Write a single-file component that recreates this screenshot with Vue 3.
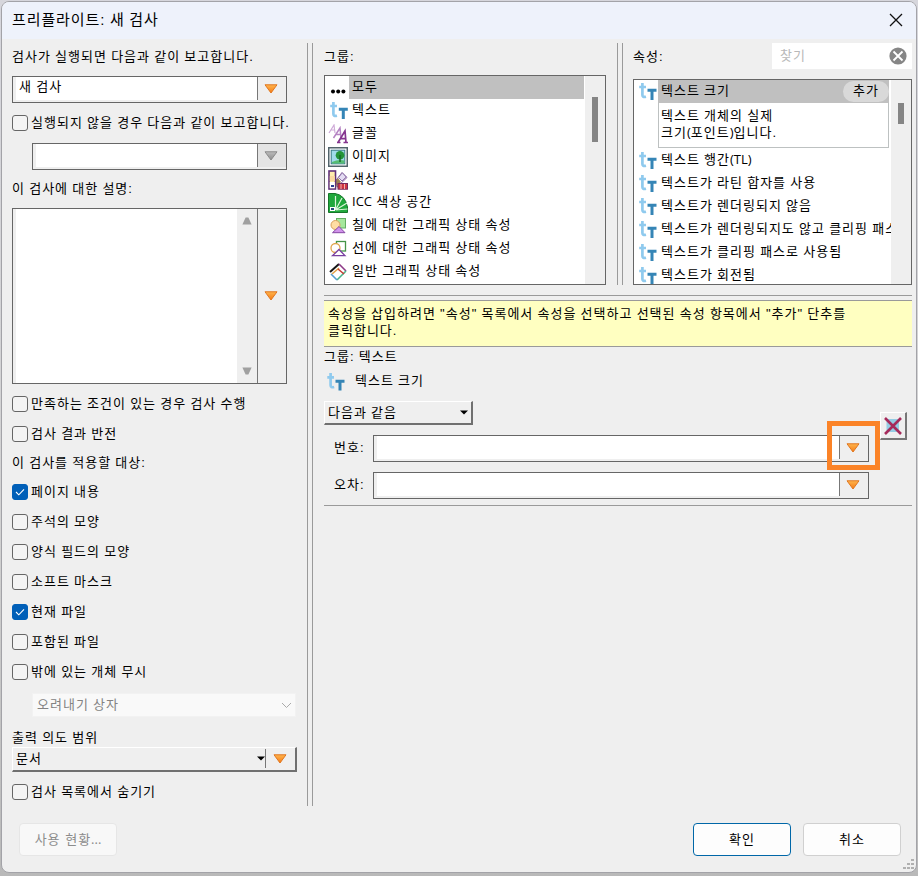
<template>
  <div class="screen">
    <div class="dialog">
      <header class="title-bar">
        <h1>프리플라이트: 새 검사</h1>
        <svg class="close" width="14" height="14" viewBox="0 0 14 14">
          <path d="M1 1L13 13M13 1L1 13" />
        </svg>
      </header>

      <div class="body">
        <!-- left panel -->
        <section class="left">
          <div class="label first">검사가 실행되면 다음과 같이 보고합니다.</div>
          <div class="field">
            <div class="input">{{ state.name }}</div>
            <div class="drop"><svg width="14" height="10" viewBox="0 0 14 10"><path class="tri" d="M1 .8H13L7 9Z" /></svg></div>
          </div>
          <label class="check tall"><i class="box"></i><span>실행되지 않을 경우 다음과 같이 보고합니다.</span></label>
          <div class="field indent">
            <div class="input"></div>
            <div class="drop off"><svg width="14" height="10" viewBox="0 0 14 10"><path class="tri gray" d="M1 .8H13L7 9Z" /></svg></div>
          </div>
          <div class="label desc-label">이 검사에 대한 설명:</div>
          <div class="field area">
            <div class="input"></div>
            <div class="scroll">
              <svg width="10" height="8" viewBox="0 0 10 8"><path d="M3.6 .5H6.4L9.6 7.5H.4Z" /></svg>
              <svg width="10" height="8" viewBox="0 0 10 8"><path d="M.4 .5H9.6L6.4 7.5H3.6Z" /></svg>
            </div>
            <div class="drop"><svg width="14" height="10" viewBox="0 0 14 10"><path class="tri" d="M1 .8H13L7 9Z" /></svg></div>
          </div>

          <div class="options">
            <label v-for="item in state.options" :key="item.text" class="check">
              <i class="box"></i><span>{{ item.text }}</span>
            </label>
          </div>
          <div class="label target-label">이 검사를 적용할 대상:</div>
          <label v-for="item in state.targets" :key="item.text" class="check" @click="item.on = !item.on">
            <i class="box" :class="{ on: item.on }">
              <svg v-if="item.on" width="10" height="8" viewBox="0 0 10 8"><path d="M1 4L3.8 6.8L9 1.4" /></svg>
            </i>
            <span>{{ item.text }}</span>
          </label>
          <div class="select-off">
            <span>오려내기 상자</span>
            <svg width="11" height="7" viewBox="0 0 11 7"><path d="M1 1L5.5 5.5L10 1" /></svg>
          </div>
          <div class="label scope-label">출력 의도 범위</div>
          <div class="select wide">
            <span>문서</span>
            <svg width="8" height="5" viewBox="0 0 8 5"><path d="M0 .5H8L4 4.5Z" /></svg>
            <div class="side"><svg width="14" height="10" viewBox="0 0 14 10"><path class="tri" d="M1 .8H13L7 9Z" /></svg></div>
          </div>
          <label class="check last"><i class="box"></i><span>검사 목록에서 숨기기</span></label>
        </section>

        <div class="v-split"></div>

        <!-- right panel -->
        <section class="right">
          <div class="lists">
            <div class="groups">
              <div class="label group-label">그룹:</div>
              <div class="list">
                <div class="items">
                  <div v-for="(item, idx) in state.groups" :key="item.text" class="item" :class="{ active: idx === state.group }" @click="state.group = idx">
                    <svg class="icon" width="20" height="20" viewBox="0 0 20 20">
                      <g v-if="item.icon === 'dots'"><circle cx="5" cy="13.5" r="2" /><circle cx="10.2" cy="13.5" r="2" /><circle cx="15.4" cy="13.5" r="2" /></g>
                      <g v-else-if="item.icon === 'text'">
                        <path d="M5.4 1V12.9Q5.4 15.6 9 14.7M2.2 5H9" fill="none" stroke="#8fcaee" stroke-width="2.7" />
                        <path d="M10.8 8.3H19.8M15.3 8.3V18" fill="none" stroke="#3585b6" stroke-width="3" />
                      </g>
                      <g v-else-if="item.icon === 'font'" fill="none">
                        <path d="M1 9L6 1L7 9M3 6H7" stroke="#cfabd8" stroke-width="1.2" />
                        <path d="M5.5 14L12 4L13 14M8 10.5H12.5" stroke="#b583c3" stroke-width="1.5" />
                        <path d="M10 18.5L17 7L18 18.5M13 14.7H17.5M9 18.5H12.5M15.5 18.5H20" stroke="#85358f" stroke-width="1.7" />
                      </g>
                      <g v-else-if="item.icon === 'image'">
                        <rect x=".75" y=".75" width="18.5" height="18.5" fill="#fff" stroke="#52646b" stroke-width="1.5" />
                        <rect x="3.2" y="3.2" width="13.6" height="13.6" fill="#a0dbea" stroke="#357985" />
                        <path d="M4 15Q10 12 16.4 13.4V16.4H4Z" fill="#56bd72" />
                        <circle cx="12" cy="8.2" r="4.3" fill="#249439" /><path d="M12 8V15" stroke="#176226" stroke-width="1.4" />
                      </g>
                      <g v-else-if="item.icon === 'color'">
                        <path d="M8 9L13 13L9 18Z" fill="#9a8153" />
                        <path d="M7.5 11L14 2.5L19 7.5L9 17" fill="#fff" stroke="#8960a2" />
                        <path d="M7.5 11L10 8L13 12L8.5 17Z" fill="#9a8153" />
                        <path d="M10.5 7.5L14.3 2.8L18.2 7L14 11Z" fill="#e4dcf3" stroke="#8d74a8" />
                        <rect x="10" y="13.5" width="9.5" height="5.7" fill="#cf3540" stroke="#75295c" /><path d="M13 14V19M16.5 14V19" stroke="#efb2b2" />
                        <rect x="1" y="1" width="6.5" height="18" fill="#ffedac" stroke="#60317a" stroke-width="1.6" />
                        <rect x="1.8" y="6" width="5" height="5" fill="#fbd9a0" /><rect x="1.8" y="12" width="5" height="6.2" fill="#fff" />
                        <rect x="3" y="15" width="3" height="2" fill="#293f91" />
                      </g>
                      <g v-else-if="item.icon === 'icc'">
                        <path d="M.5 .5H7Q17 2 19.5 14V19.5H.5Z" fill="#20a83c" stroke="#167529" />
                        <path d="M7.5 17L7.5 3M7.5 17L14 5M7.5 17L19 10M7.5 17L19.5 16" stroke="#dcf5d9" stroke-width="1.2" />
                        <rect x="2.5" y="14.5" width="4" height="3" fill="#264c79" stroke="#fff" />
                      </g>
                      <g v-else-if="item.icon === 'fill'">
                        <rect x="8.5" y="2.5" width="9" height="9.5" fill="#a5e79c" stroke="#65ae64" />
                        <circle cx="7.5" cy="9" r="4.5" fill="#ffdda3" stroke="#d8a05b" />
                        <path d="M11 10.5L17 16.7H4.5Z" fill="#d193eb" stroke="#8547a3" />
                      </g>
                      <g v-else-if="item.icon === 'line'">
                        <rect x="8.5" y="2.5" width="9" height="9.5" fill="#fff" stroke="#459447" stroke-width="1.3" />
                        <circle cx="7.5" cy="9" r="4.5" fill="#fff" stroke="#e0a54f" stroke-width="1.3" />
                        <path d="M11 10.5L17 16.7H4.5Z" fill="#fff" stroke="#7940a0" stroke-width="1.3" />
                      </g>
                      <g v-else-if="item.icon === 'general'" fill="none" stroke-width="1.6">
                        <path d="M2 10L11 2" stroke="#161616" stroke-width="2" /><path d="M11 2L18 9" stroke="#8e3a88" />
                        <path d="M18 9L9 18" stroke="#4cb48c" /><path d="M9 18L3 12" stroke="#559cd0" />
                        <path d="M4 12L11 6" stroke="#e2a147" /><path d="M10 7L16 12" stroke="#c83c33" />
                      </g>
                      <rect v-else width="20" height="3" fill="#a9a0ad" />
                    </svg>
                    <span><i v-for="(part, n) in split(item.text)" :key="n" :class="{ latin: n % 2 }">{{ part }}</i></span>
                  </div>
                </div>
                <div class="track"><div class="thumb group-thumb"></div></div>
              </div>
            </div>

            <div class="v-split"></div>

            <div class="props">
              <div class="props-head">
                <div class="label">속성:</div>
                <div class="search">
                  <span>찾기</span>
                  <svg width="18" height="18" viewBox="0 0 18 18"><circle cx="9" cy="9" r="8.6" /><path d="M4.5 4.5L13.5 13.5M13.5 4.5L4.5 13.5" /></svg>
                </div>
              </div>
              <div class="list">
                <div class="items">
                  <template v-for="(text, idx) in state.props" :key="text">
                    <div class="item" :class="{ active: idx === 0 }">
                      <svg class="icon" width="20" height="20" viewBox="0 0 20 20">
                        <path d="M5.4 1V12.9Q5.4 15.6 9 14.7M2.2 5H9" fill="none" stroke="#8fcaee" stroke-width="2.7" />
                        <path d="M10.5 8.3H19.5M15 8.3V18" fill="none" stroke="#3585b6" stroke-width="3" />
                      </svg>
                      <span><i v-for="(part, n) in split(text)" :key="n" :class="{ latin: n % 2 }">{{ part }}</i></span>
                      <b v-if="idx === 0" class="add">추가</b>
                    </div>
                    <div v-if="idx === 0" class="info">텍스트 개체의 실제<br>크기<i class="latin">(</i>포인트<i class="latin">)</i>입니다.</div>
                  </template>
                </div>
                <div class="track"><div class="thumb prop-thumb"></div></div>
              </div>
            </div>
          </div>

          <div class="h-split"></div>
          <div class="notice">속성을 삽입하려면 "속성" 목록에서 속성을 선택하고 선택된 속성 항목에서 "추가" 단추를<br>클릭합니다.</div>

          <div class="rule">
            <div class="rule-main">
              <div class="rule-group">그룹: 텍스트</div>
              <div class="rule-name">
                <svg width="20" height="20" viewBox="0 0 20 20">
                  <path d="M4.6 1V13.2Q4.6 15.9 8.2 15M1.3 5.3H8" fill="none" stroke="#8fcaee" stroke-width="2.7" />
                  <path d="M9.5 9.3H18.5M14 9.3V18.5" fill="none" stroke="#3585b6" stroke-width="3" />
                </svg>
                <span>텍스트 크기</span>
              </div>
              <div class="select">
                <span>다음과 같음</span>
                <svg width="8" height="5" viewBox="0 0 8 5"><path d="M0 .5H8L4 4.5Z" /></svg>
              </div>
              <div v-for="(text, idx) in ['번호:', '오차:']" :key="text" class="value">
                <span>{{ text }}</span>
                <div class="field">
                  <div class="input"></div>
                  <div class="drop"><svg width="14" height="10" viewBox="0 0 14 10"><path class="tri" d="M1 .8H13L7 9Z" /></svg></div>
                </div>
                <div v-if="idx === 0" class="highlight"></div>
              </div>
            </div>
            <button class="remove">
              <svg width="20" height="20" viewBox="0 0 20 20">
                <rect x="3.5" y="3" width="12.5" height="13" fill="#95cce4" />
                <path d="M2 2L18 18M18 2L2 18" fill="none" stroke="#a62b5b" stroke-width="2.6" />
              </svg>
            </button>
          </div>
        </section>
      </div>

      <footer class="footer">
        <button class="btn usage" disabled>사용 현황<i class="latin">...</i></button>
        <button class="btn ok">확인</button>
        <button class="btn">취소</button>
        <svg class="grip" width="12" height="12" viewBox="0 0 12 12">
          <path d="M9 1h3v2h-3zM5 5h3v2h-3zM9 5h3v2h-3zM1 9h3v2h-3zM5 9h3v2h-3zM9 9h3v2h-3z" />
        </svg>
      </footer>
    </div>
    <!-- shared gradients of the drop arrows -->
    <svg class="defs" width="0" height="0">
      <linearGradient id="orange" x1="0" y1="0" x2="0" y2="1"><stop offset="0" stop-color="#ffb54d" /><stop offset="1" stop-color="#f57b14" /></linearGradient>
      <linearGradient id="gray" x1="0" y1="0" x2="0" y2="1"><stop offset="0" stop-color="#bdbdbd" /><stop offset="1" stop-color="#8c8c8c" /></linearGradient>
    </svg>
  </div>
</template>

<script setup>
import { reactive } from 'vue';

const state = reactive({
  name: '새 검사',
  group: 0,
  options: [
    { text: '만족하는 조건이 있는 경우 검사 수행' },
    { text: '검사 결과 반전' }
  ],
  targets: [
    { text: '페이지 내용', on: true },
    { text: '주석의 모양', on: false },
    { text: '양식 필드의 모양', on: false },
    { text: '소프트 마스크', on: false },
    { text: '현재 파일', on: true },
    { text: '포함된 파일', on: false },
    { text: '밖에 있는 개체 무시', on: false }
  ],
  groups: [
    { icon: 'dots', text: '모두' },
    { icon: 'text', text: '텍스트' },
    { icon: 'font', text: '글꼴' },
    { icon: 'image', text: '이미지' },
    { icon: 'color', text: '색상' },
    { icon: 'icc', text: 'ICC 색상 공간' },
    { icon: 'fill', text: '칠에 대한 그래픽 상태 속성' },
    { icon: 'line', text: '선에 대한 그래픽 상태 속성' },
    { icon: 'general', text: '일반 그래픽 상태 속성' },
    { icon: 'more', text: '' }
  ],
  props: [
    '텍스트 크기',
    '텍스트 행간(TL)',
    '텍스트가 라틴 합자를 사용',
    '텍스트가 렌더링되지 않음',
    '텍스트가 렌더링되지도 않고 클리핑 패스',
    '텍스트가 클리핑 패스로 사용됨',
    '텍스트가 회전됨'
  ]
});

// odd parts are the latin runs
const split = (text) => text.split(/([A-Z()]+)/);
</script>

<style>
body {
  margin: 0;
  overflow: hidden;
}
</style>

<style scoped>
* {
  box-sizing: border-box;
}
.screen {
  width: 918px;
  height: 876px;
  padding: 1px 1px 0;
  background: linear-gradient(#d6d6dc 0, #d2d2d2 60%, #b9b9b9 100%);
  font: 13px/17px "Liberation Sans", "Noto Sans CJK KR", sans-serif;
  letter-spacing: 1px;
  word-spacing: -0.4px;
  color: #000;
  white-space: nowrap;
}
.dialog {
  height: 872px;
  border: 1px solid #a3a3a8;
  border-radius: 8px;
  background: #efefef;
  overflow: hidden;
}
i {
  font-style: normal;
}
.latin {
  font-family: "Open Sans", sans-serif;
  letter-spacing: 0;
}
svg {
  display: block;
  flex: none;
}
.defs {
  position: absolute;
}
.title-bar {
  display: flex;
  justify-content: space-between;
  align-items: center;
  height: 37px;
  padding: 0 13px 2px 10px;
  background: #eef2fb;
}
.title-bar h1 {
  margin: 0;
  font-size: 15px;
  font-weight: 400;
  letter-spacing: 0.9px;
}
.close path {
  fill: none;
  stroke: #111;
  stroke-width: 1.3;
}
.body {
  display: flex;
  height: 784px;
}
.left {
  width: 305px;
  padding-left: 10px;
}
.label {
  display: flex;
  align-items: center;
}
.first {
  height: 34px;
  margin-bottom: 3px;
}
.desc-label {
  height: 36px;
  margin-bottom: 2px;
}
.target-label {
  height: 26px;
  margin-bottom: 2px;
}
.scope-label {
  height: 20px;
  margin-top: 10px;
}

/* text field with a drop arrow on its right */
.field {
  display: flex;
  width: 275px;
  height: 27px;
  padding: 0 0 2px 3px;
  border: 1px solid #666;
}
.field.indent {
  width: 255px;
  margin-left: 20px;
}
.field.area {
  height: 176px;
  padding-bottom: 0;
}
.input {
  flex: 1;
  padding: 1px 3px;
  background: #fff;
}
.drop {
  display: flex;
  align-items: center;
  justify-content: center;
  width: 29px;
  padding-right: 2px;
  border-left: 1px solid #777;
}
.drop.off {
  background: #e4e4e4;
}
.tri {
  fill: url(#orange);
  stroke: #e0761f;
  stroke-width: 1;
}
.tri.gray {
  fill: url(#gray);
  stroke: #8b8b8b;
}
.scroll {
  display: flex;
  flex-direction: column;
  justify-content: space-between;
  align-items: center;
  width: 20px;
  padding: 8px 1px 8px 0;
}
.scroll path {
  fill: #a0a0a0;
}

.check {
  display: flex;
  align-items: center;
  height: 30px;
}
.check.tall {
  height: 40px;
}
.check.last {
  margin-top: 5px;
}
.check span {
  padding: 0 0 2px 3px;
}
.options {
  margin-top: 5px;
}
.box {
  display: flex;
  align-items: center;
  justify-content: center;
  width: 16px;
  height: 16px;
  border: 1px solid #666;
  border-radius: 3px;
  background: #f4f4f4;
}
.box.on {
  border-color: #005fb8;
  background: #005fb8;
}
.box path {
  fill: none;
  stroke: #fff;
  stroke-width: 1.1;
}
.select-off {
  display: flex;
  align-items: center;
  justify-content: space-between;
  width: 264px;
  height: 24px;
  margin: 6px 0 0 20px;
  padding: 0 3px 0 4px;
  border: 1px solid #f2f2f2;
  background: #f9f9f9;
  color: #838383;
}
.select-off span {
  padding-bottom: 2px;
}
.select-off path {
  fill: none;
  stroke: #aaa;
}
.select {
  display: flex;
  align-items: center;
  justify-content: space-between;
  width: 149px;
  height: 24px;
  padding: 0 3px 1px;
  border: 1px solid #fff;
  border-right: 2px solid #707070;
  border-bottom: 2px solid #707070;
}
.select.wide {
  width: 285px;
  height: 25px;
  padding-right: 0;
}
.select.wide span {
  flex: 1;
}
.side {
  display: flex;
  align-items: center;
  height: 19px;
  width: 30px;
  padding-left: 7px;
  border-left: 1px solid #777;
}

.v-split {
  width: 6px;
  margin-top: 4px;
  height: 763px;
  border: solid #9a9a9a;
  border-width: 0 1px;
}
.right {
  width: 588px;
  margin-left: 11px;
}
.lists {
  display: flex;
  height: 246px;
}
.lists .v-split {
  height: 242px;
  margin: 4px 10px 0 11px;
}
.groups {
  width: 282px;
}
.group-label {
  height: 34px;
  margin-bottom: 2px;
}
.list {
  display: flex;
  height: 210px;
  border: 1px solid #666;
  background: #fff;
  overflow: hidden;
}
.items {
  flex: 1;
  min-width: 0;
  overflow: hidden;
}
.item {
  display: flex;
  height: 23px;
}
.icon {
  margin: 2px 1px 0 3px;
}
.item span {
  flex: 1;
  padding: 2px 0 0 3px;
  height: 23px;
  overflow: hidden;
}
.active {
  background: linear-gradient(90deg, #fff 24px, #c0c0c0 24px);
}
.groups .active {
  margin-right: 1px;
}
.track {
  width: 20px;
  background: #efefef;
}
.thumb {
  width: 6px;
  margin-left: 7px;
  background: #858585;
}
.group-thumb {
  height: 45px;
  margin-top: 21px;
}
.props {
  width: 279px;
}
.props-head {
  display: flex;
  justify-content: space-between;
  height: 40px;
}
.props-head .label {
  height: 34px;
}
.search {
  display: flex;
  align-items: center;
  justify-content: space-between;
  width: 140px;
  height: 26px;
  margin-top: 4px;
  padding: 0 5px 0 8px;
  background: #fff;
  color: #b8b8b8;
}
.search span {
  padding-bottom: 2px;
}
.search circle {
  fill: #868686;
}
.search path {
  fill: none;
  stroke: #fff;
  stroke-width: 1.8;
}
.props .list {
  height: 206px;
}
.props .active {
  margin-right: 2px;
}
.prop-thumb {
  height: 21px;
  margin-top: 23px;
}
.add {
  width: 46px;
  height: 21px;
  margin-top: 1px;
  padding-top: 1px;
  border-radius: 11px;
  background: #d9d9d9;
  font-weight: 400;
  text-align: center;
}
.info {
  height: 45px;
  margin: 0 2px 1px 24px;
  padding: 4px 2px;
  border: 1px solid #bdc1c1;
  border-top: 0;
}

.h-split {
  height: 6px;
  margin-top: 10px;
  border: solid #9a9a9a;
  border-width: 1px 0;
}
.notice {
  height: 46px;
  padding: 4px;
  border-bottom: 1px solid #9a9a9a;
  background: #ffffc1;
}
.rule {
  display: flex;
  height: 159px;
  border-bottom: 1px solid #9a9a9a;
}
.rule-main {
  width: 545px;
}
.rule-group {
  height: 22px;
  padding-top: 1px;
}
.rule-name {
  display: flex;
  height: 32px;
  padding: 3px 2px;
}
.rule-name span {
  margin-left: 9px;
}
.value {
  position: relative;
  display: flex;
  height: 27px;
  margin-top: 10px;
}
.value span {
  width: 49px;
  padding: 4px 0 0 10px;
}
.value .field {
  width: 496px;
}
.highlight {
  position: absolute;
  left: 503px;
  top: -14px;
  width: 53px;
  height: 49px;
  border: 5px solid #fb8327;
}
.remove {
  display: flex;
  align-items: center;
  justify-content: center;
  width: 27px;
  height: 28px;
  margin: 65px 0 0 11px;
  padding: 0;
  border: 1px solid #fff;
  border-right: 2px solid #777;
  border-bottom: 2px solid #777;
  background: #efefef;
}

.footer {
  display: flex;
  height: 50px;
  padding-left: 17px;
}
.btn {
  width: 98px;
  height: 33px;
  margin-right: 12px;
  padding: 0 0 1px;
  border: 1px solid #d0d0d0;
  border-radius: 4px;
  background: #fdfdfd;
  color: #000;
  font: inherit;
  letter-spacing: inherit;
}
.btn.usage {
  margin-right: 576px;
  border-color: #e6e6e6;
  background: #f8f8f8;
  color: #8c8c8c;
}
.btn.ok {
  border-color: #0067a8;
}
.grip {
  margin: 35px 0 0 -11px;
  fill: #b0b0b0;
}
</style>
